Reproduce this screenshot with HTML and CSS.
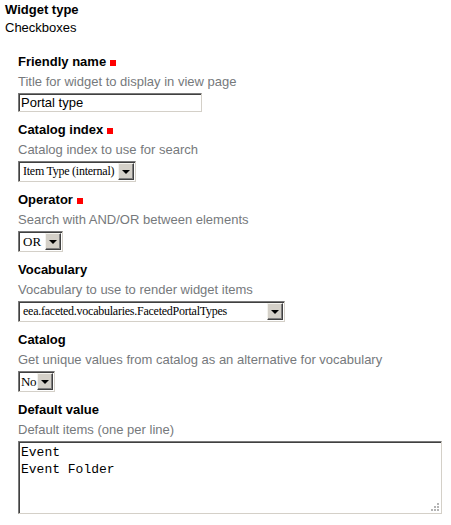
FILE: index.html
```html
<!DOCTYPE html>
<html>
<head>
<meta charset="utf-8">
<link rel="stylesheet" href="styles.css">
</head>
<body>
<div class="page">
  <div class="widget-type">
    <div class="wt-label">Widget type</div>
    <div class="wt-value">Checkboxes</div>
  </div>
  <div class="fields">
    <div class="field">
      <div class="label">Friendly name <span class="req"></span></div>
      <div class="help">Title for widget to display in view page</div>
      <input class="text" type="text" value="Portal type">
    </div>
    <div class="field">
      <div class="label">Catalog index <span class="req"></span></div>
      <div class="help">Catalog index to use for search</div>
      <span class="sel w-index"><span class="sel-text">Item Type (internal)</span><span class="btn"><span class="tri"></span></span></span>
    </div>
    <div class="field">
      <div class="label">Operator <span class="req"></span></div>
      <div class="help">Search with AND/OR between elements</div>
      <span class="sel w-op"><span class="sel-text">OR</span><span class="btn"><span class="tri"></span></span></span>
    </div>
    <div class="field">
      <div class="label">Vocabulary</div>
      <div class="help">Vocabulary to use to render widget items</div>
      <span class="sel w-voc"><span class="sel-text">eea.faceted.vocabularies.FacetedPortalTypes</span><span class="btn"><span class="tri"></span></span></span>
    </div>
    <div class="field">
      <div class="label">Catalog</div>
      <div class="help">Get unique values from catalog as an alternative for vocabulary</div>
      <span class="sel w-cat"><span class="sel-text">No</span><span class="btn"><span class="tri"></span></span></span>
    </div>
    <div class="field">
      <div class="label">Default value</div>
      <div class="help">Default items (one per line)</div>
      <div class="area-wrap"><textarea class="area">Event
Event Folder</textarea><span class="grip"></span></div>
    </div>
  </div>
</div>
</body>
</html>
```

FILE: styles.css
```css
html, body {
  margin: 0;
  padding: 0;
  background: #fff;
}
body {
  font-family: "Liberation Sans", Arial, sans-serif;
  font-size: 13px;
  color: #000;
}
.page {
  padding: 1px 5px 0 5px;
}
.widget-type {
  line-height: 18px;
}
.wt-label {
  font-weight: bold;
}
.fields {
  padding-left: 13px;
  padding-top: 16px;
  display: flex;
  flex-direction: column;
}
.field {
  display: flex;
  flex-direction: column;
  align-items: flex-start;
  margin-bottom: 9px;
}
.label {
  font-weight: bold;
  line-height: 18px;
  display: flex;
  align-items: center;
  gap: 4px;
}
.req {
  display: inline-block;
  width: 6px;
  height: 6px;
  background: #ff0000;
  margin-top: 2px;
}
.help {
  color: #76797c;
  line-height: 18px;
  margin-top: 2px;
  margin-bottom: 2px;
}
.text {
  box-sizing: border-box;
  width: 184px;
  height: 19px;
  margin: 0;
  padding: 0 0 0 2px;
  font-family: "Liberation Sans", Arial, sans-serif;
  font-size: 13px;
  color: #000;
  border: 1px solid;
  border-color: #7a7a7a #d4d0c8 #d4d0c8 #7a7a7a;
  box-shadow: inset 1px 1px 0 #404040;
  outline: none;
}
.sel {
  position: relative;
  box-sizing: border-box;
  display: flex;
  align-items: center;
  height: 21px;
  border: 1px solid;
  border-color: #7a7a7a #d4d0c8 #d4d0c8 #7a7a7a;
  box-shadow: inset 1px 1px 0 #404040;
  background: #fff;
  font-family: "Liberation Serif", "Times New Roman", serif;
  font-size: 12px;
  letter-spacing: -0.25px;
  padding-left: 4px;
  white-space: nowrap;
  overflow: hidden;
}
.sel-text {
  flex: 1;
}
.btn {
  position: absolute;
  right: 1px;
  top: 1px;
  bottom: 1px;
  width: 16px;
  box-sizing: border-box;
  background: #d4d0c8;
  border: 1px solid;
  border-color: #f4f3ee #404040 #404040 #f4f3ee;
  box-shadow: inset -1px -1px 0 #808080;
  display: flex;
  align-items: center;
  justify-content: center;
}
.tri {
  width: 0;
  height: 0;
  border-left: 4px solid transparent;
  border-right: 4px solid transparent;
  border-top: 4px solid #000;
  margin-left: -1px;
}
.w-index { width: 118px; }
.w-op { width: 45px; font-size: 13px; letter-spacing: 0; }
.w-voc { width: 267px; }
.w-cat { width: 37px; padding-left: 2px; font-size: 13px; letter-spacing: -0.5px; }
.area-wrap {
  position: relative;
  display: flex;
}
.area {
  box-sizing: border-box;
  width: 424px;
  height: 73px;
  margin: 0;
  padding: 2px 2px;
  font-family: "Liberation Mono", "Courier New", monospace;
  font-size: 13px;
  line-height: 17px;
  color: #000;
  border: 1px solid;
  border-color: #7a7a7a #d4d0c8 #d4d0c8 #7a7a7a;
  box-shadow: inset 1px 1px 0 #404040;
  outline: none;
  resize: none;
}
.grip {
  position: absolute;
  right: 3px;
  bottom: 3px;
  width: 8px;
  height: 8px;
  background:
    linear-gradient(#b4b4b4, #b4b4b4) 6px 0 / 2px 2px no-repeat,
    linear-gradient(#b4b4b4, #b4b4b4) 3px 3px / 2px 2px no-repeat,
    linear-gradient(#b4b4b4, #b4b4b4) 6px 3px / 2px 2px no-repeat,
    linear-gradient(#b4b4b4, #b4b4b4) 0 6px / 2px 2px no-repeat,
    linear-gradient(#b4b4b4, #b4b4b4) 3px 6px / 2px 2px no-repeat,
    linear-gradient(#b4b4b4, #b4b4b4) 6px 6px / 2px 2px no-repeat;
}
```
